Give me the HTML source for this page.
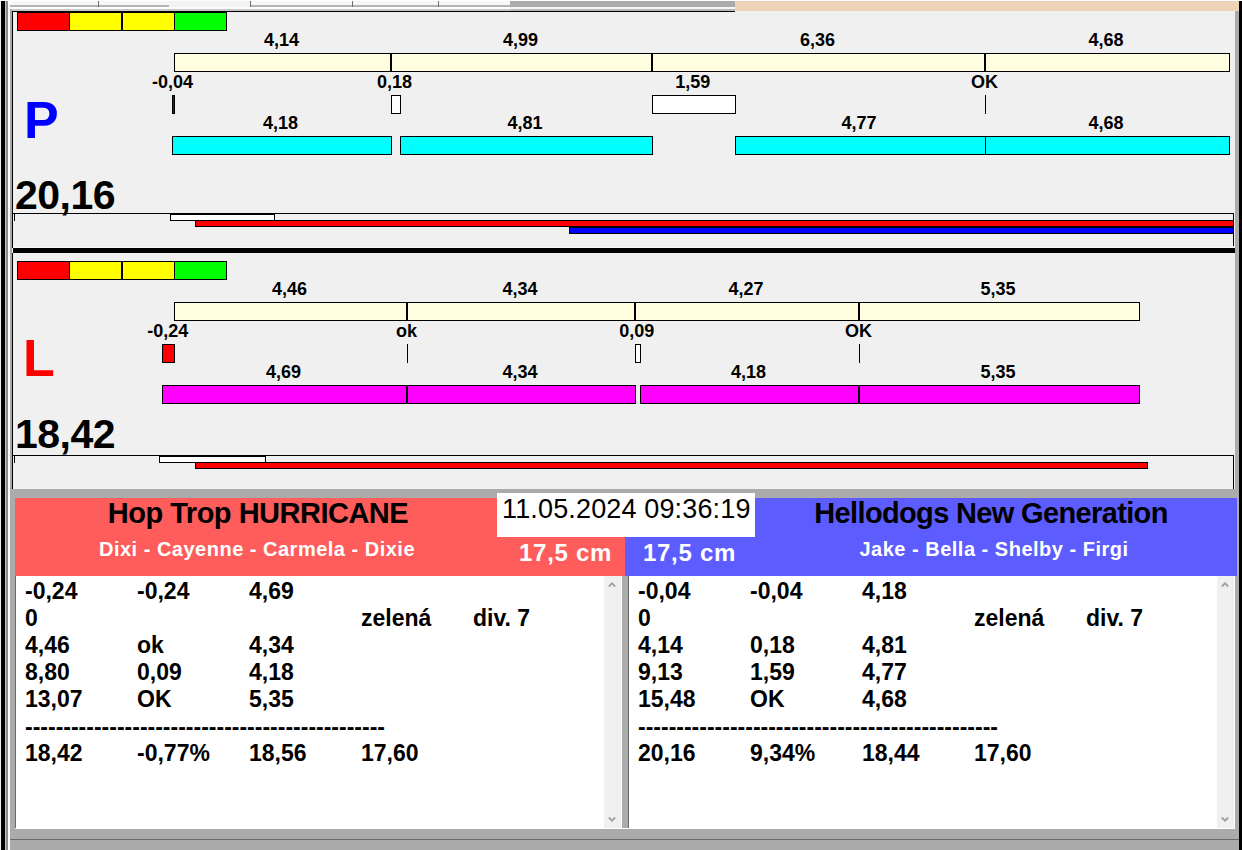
<!DOCTYPE html>
<html><head><meta charset="utf-8"><style>
html,body{margin:0;padding:0;}
body{width:1242px;height:850px;position:relative;overflow:hidden;background:#f0f0f0;font-family:"Liberation Sans", sans-serif;}
.a{position:absolute;box-sizing:border-box;}
.t{position:absolute;white-space:pre;font-family:"Liberation Sans", sans-serif;}
</style></head><body>
<div class="a" style="left:0px;top:0px;width:1242px;height:850px;background:#f0f0f0;"></div>
<div class="a" style="left:5px;top:0px;width:1234px;height:11px;background:#f0f0f0;"></div>
<div class="a" style="left:8px;top:1px;width:502px;height:4px;background:#f7f7f7;"></div>
<div class="a" style="left:8px;top:5px;width:502px;height:2px;background:#b4b4b4;"></div>
<div class="a" style="left:5px;top:7px;width:1234px;height:2px;background:#fdfdfd;"></div>
<div class="a" style="left:5px;top:9px;width:1234px;height:2px;background:#c8c8c8;"></div>
<div class="a" style="left:169px;top:1px;width:81px;height:6px;background:#f3f3f3;"></div>
<div class="a" style="left:98px;top:1px;width:1px;height:6px;background:#6e6e6e;"></div>
<div class="a" style="left:250px;top:1px;width:1px;height:6px;background:#6e6e6e;"></div>
<div class="a" style="left:352px;top:1px;width:1px;height:6px;background:#6e6e6e;"></div>
<div class="a" style="left:438px;top:1px;width:1px;height:6px;background:#6e6e6e;"></div>
<div class="a" style="left:510px;top:1px;width:225px;height:6px;background:#ababab;"></div>
<div class="a" style="left:510px;top:7px;width:225px;height:2px;background:#f5f5f5;"></div>
<div class="a" style="left:510px;top:9px;width:225px;height:2px;background:#b8b8b8;"></div>
<div class="a" style="left:735px;top:1px;width:504px;height:11px;background:#efd3b8;"></div>
<div class="a" style="left:0px;top:0px;width:1242px;height:1px;background:#ffffff;"></div>
<div class="a" style="left:1px;top:1px;width:4px;height:849px;background:#000;"></div>
<div class="a" style="left:5px;top:1px;width:1px;height:849px;background:#c0c0c0;"></div>
<div class="a" style="left:6px;top:1px;width:2px;height:849px;background:#8c8c8c;"></div>
<div class="a" style="left:8px;top:1px;width:2px;height:849px;background:#ffffff;"></div>
<div class="a" style="left:10px;top:9px;width:2px;height:841px;background:#a9a9a9;"></div>
<div class="a" style="left:1235px;top:11px;width:4px;height:839px;background:#ababab;"></div>
<div class="a" style="left:1239px;top:1px;width:3px;height:849px;background:#000;"></div>
<div class="a" style="left:12px;top:11px;width:1223px;height:237px;background:#f0f0f0;"></div>
<div class="a" style="left:12px;top:11px;width:1px;height:237px;background:#000;"></div>
<div class="a" style="left:12px;top:11px;width:723px;height:1px;background:#000;"></div>
<div class="a" style="left:12px;top:253px;width:1223px;height:236px;background:#f0f0f0;"></div>
<div class="a" style="left:12px;top:253px;width:1px;height:236px;background:#000;"></div>
<div class="a" style="left:13px;top:248px;width:1222px;height:5px;background:#000;"></div>
<div class="a" style="left:13px;top:247px;width:1222px;height:1px;background:#fafafa;"></div>
<div class="a" style="left:17px;top:12px;width:53px;height:19px;background:#ff0000;box-shadow:inset 0 0 0 1px #000;"></div>
<div class="a" style="left:69px;top:12px;width:53px;height:19px;background:#ffff00;box-shadow:inset 0 0 0 1px #000;"></div>
<div class="a" style="left:122px;top:12px;width:53px;height:19px;background:#ffff00;box-shadow:inset 0 0 0 1px #000;"></div>
<div class="a" style="left:174px;top:12px;width:53px;height:19px;background:#00ff00;box-shadow:inset 0 0 0 1px #000;"></div>
<div class="t" style="left:24px;top:94px;font-size:52px;line-height:52px;font-weight:bold;color:#0000ff;">P</div>
<div class="t" style="left:-18.5px;width:600px;text-align:center;top:31px;font-size:18px;line-height:18px;font-weight:bold;color:#000;">4,14</div>
<div class="t" style="left:220.5px;width:600px;text-align:center;top:31px;font-size:18px;line-height:18px;font-weight:bold;color:#000;">4,99</div>
<div class="t" style="left:517.5px;width:600px;text-align:center;top:31px;font-size:18px;line-height:18px;font-weight:bold;color:#000;">6,36</div>
<div class="t" style="left:806.0px;width:600px;text-align:center;top:31px;font-size:18px;line-height:18px;font-weight:bold;color:#000;">4,68</div>
<div class="a" style="left:174px;top:53px;width:218px;height:19px;background:#ffffe0;box-shadow:inset 0 0 0 1px #000;"></div>
<div class="a" style="left:391px;top:53px;width:262px;height:19px;background:#ffffe0;box-shadow:inset 0 0 0 1px #000;"></div>
<div class="a" style="left:390px;top:53px;width:2px;height:19px;background:#000;"></div>
<div class="a" style="left:652px;top:53px;width:334px;height:19px;background:#ffffe0;box-shadow:inset 0 0 0 1px #000;"></div>
<div class="a" style="left:651px;top:53px;width:2px;height:19px;background:#000;"></div>
<div class="a" style="left:985px;top:53px;width:245px;height:19px;background:#ffffe0;box-shadow:inset 0 0 0 1px #000;"></div>
<div class="a" style="left:984px;top:53px;width:2px;height:19px;background:#000;"></div>
<div class="t" style="left:-127.5px;width:600px;text-align:center;top:73px;font-size:18px;line-height:18px;font-weight:bold;color:#000;">-0,04</div>
<div class="t" style="left:94.5px;width:600px;text-align:center;top:73px;font-size:18px;line-height:18px;font-weight:bold;color:#000;">0,18</div>
<div class="t" style="left:392.70000000000005px;width:600px;text-align:center;top:73px;font-size:18px;line-height:18px;font-weight:bold;color:#000;">1,59</div>
<div class="t" style="left:684.6px;width:600px;text-align:center;top:73px;font-size:18px;line-height:18px;font-weight:bold;color:#000;">OK</div>
<div class="a" style="left:172px;top:95px;width:3px;height:19px;background:#800000;box-shadow:inset 0 0 0 1px #000;"></div>
<div class="a" style="left:391px;top:95px;width:10px;height:19px;background:#ffffff;box-shadow:inset 0 0 0 1px #000;"></div>
<div class="a" style="left:652px;top:95px;width:84px;height:19px;background:#ffffff;box-shadow:inset 0 0 0 1px #000;"></div>
<div class="a" style="left:985px;top:95px;width:1px;height:19px;background:#000;"></div>
<div class="t" style="left:-19.5px;width:600px;text-align:center;top:114px;font-size:18px;line-height:18px;font-weight:bold;color:#000;">4,18</div>
<div class="t" style="left:225.0px;width:600px;text-align:center;top:114px;font-size:18px;line-height:18px;font-weight:bold;color:#000;">4,81</div>
<div class="t" style="left:559.0px;width:600px;text-align:center;top:114px;font-size:18px;line-height:18px;font-weight:bold;color:#000;">4,77</div>
<div class="t" style="left:806.0px;width:600px;text-align:center;top:114px;font-size:18px;line-height:18px;font-weight:bold;color:#000;">4,68</div>
<div class="a" style="left:172px;top:136px;width:220px;height:19px;background:#00ffff;box-shadow:inset 0 0 0 1px #000;"></div>
<div class="a" style="left:400px;top:136px;width:253px;height:19px;background:#00ffff;box-shadow:inset 0 0 0 1px #000;"></div>
<div class="a" style="left:735px;top:136px;width:251px;height:19px;background:#00ffff;box-shadow:inset 0 0 0 1px #000;"></div>
<div class="a" style="left:985px;top:136px;width:245px;height:19px;background:#00ffff;box-shadow:inset 0 0 0 1px #000;"></div>
<div class="t" style="left:15px;top:175px;font-size:41px;line-height:41px;font-weight:bold;color:#000;letter-spacing:-0.5px;">20,16</div>
<div class="a" style="left:13px;top:213px;width:1221px;height:1px;background:#000;"></div>
<div class="a" style="left:1233px;top:213px;width:1px;height:33px;background:#000;"></div>
<div class="a" style="left:14px;top:214px;width:1px;height:7px;background:#000;"></div>
<div class="a" style="left:170px;top:213px;width:105px;height:8px;background:#ffffff;box-shadow:inset 0 0 0 1px #000;"></div>
<div class="a" style="left:170px;top:214px;width:105px;height:1px;background:#000;"></div>
<div class="a" style="left:195px;top:220px;width:1039px;height:7px;background:#ff0000;box-shadow:inset 0 0 0 1px #000;"></div>
<div class="a" style="left:569px;top:227px;width:665px;height:7px;background:#0000ff;box-shadow:inset 0 0 0 1px #000;"></div>
<div class="a" style="left:17px;top:261px;width:53px;height:19px;background:#ff0000;box-shadow:inset 0 0 0 1px #000;"></div>
<div class="a" style="left:69px;top:261px;width:53px;height:19px;background:#ffff00;box-shadow:inset 0 0 0 1px #000;"></div>
<div class="a" style="left:122px;top:261px;width:53px;height:19px;background:#ffff00;box-shadow:inset 0 0 0 1px #000;"></div>
<div class="a" style="left:174px;top:261px;width:53px;height:19px;background:#00ff00;box-shadow:inset 0 0 0 1px #000;"></div>
<div class="t" style="left:23px;top:332px;font-size:52px;line-height:52px;font-weight:bold;color:#ff0000;">L</div>
<div class="t" style="left:-10.5px;width:600px;text-align:center;top:280px;font-size:18px;line-height:18px;font-weight:bold;color:#000;">4,46</div>
<div class="t" style="left:220.0px;width:600px;text-align:center;top:280px;font-size:18px;line-height:18px;font-weight:bold;color:#000;">4,34</div>
<div class="t" style="left:446.0px;width:600px;text-align:center;top:280px;font-size:18px;line-height:18px;font-weight:bold;color:#000;">4,27</div>
<div class="t" style="left:698.0px;width:600px;text-align:center;top:280px;font-size:18px;line-height:18px;font-weight:bold;color:#000;">5,35</div>
<div class="a" style="left:174px;top:302px;width:234px;height:19px;background:#ffffe0;box-shadow:inset 0 0 0 1px #000;"></div>
<div class="a" style="left:407px;top:302px;width:229px;height:19px;background:#ffffe0;box-shadow:inset 0 0 0 1px #000;"></div>
<div class="a" style="left:406px;top:302px;width:2px;height:19px;background:#000;"></div>
<div class="a" style="left:635px;top:302px;width:225px;height:19px;background:#ffffe0;box-shadow:inset 0 0 0 1px #000;"></div>
<div class="a" style="left:634px;top:302px;width:2px;height:19px;background:#000;"></div>
<div class="a" style="left:859px;top:302px;width:281px;height:19px;background:#ffffe0;box-shadow:inset 0 0 0 1px #000;"></div>
<div class="a" style="left:858px;top:302px;width:2px;height:19px;background:#000;"></div>
<div class="t" style="left:-132.3px;width:600px;text-align:center;top:322px;font-size:18px;line-height:18px;font-weight:bold;color:#000;">-0,24</div>
<div class="t" style="left:106.60000000000002px;width:600px;text-align:center;top:322px;font-size:18px;line-height:18px;font-weight:bold;color:#000;">ok</div>
<div class="t" style="left:336.70000000000005px;width:600px;text-align:center;top:322px;font-size:18px;line-height:18px;font-weight:bold;color:#000;">0,09</div>
<div class="t" style="left:558.6px;width:600px;text-align:center;top:322px;font-size:18px;line-height:18px;font-weight:bold;color:#000;">OK</div>
<div class="a" style="left:162px;top:344px;width:13px;height:19px;background:#ff0000;box-shadow:inset 0 0 0 1px #000;"></div>
<div class="a" style="left:407px;top:344px;width:1px;height:19px;background:#000;"></div>
<div class="a" style="left:635px;top:344px;width:6px;height:19px;background:#ffffff;box-shadow:inset 0 0 0 1px #000;"></div>
<div class="a" style="left:859px;top:344px;width:1px;height:19px;background:#000;"></div>
<div class="t" style="left:-16.5px;width:600px;text-align:center;top:363px;font-size:18px;line-height:18px;font-weight:bold;color:#000;">4,69</div>
<div class="t" style="left:220.0px;width:600px;text-align:center;top:363px;font-size:18px;line-height:18px;font-weight:bold;color:#000;">4,34</div>
<div class="t" style="left:448.5px;width:600px;text-align:center;top:363px;font-size:18px;line-height:18px;font-weight:bold;color:#000;">4,18</div>
<div class="t" style="left:698.0px;width:600px;text-align:center;top:363px;font-size:18px;line-height:18px;font-weight:bold;color:#000;">5,35</div>
<div class="a" style="left:162px;top:385px;width:246px;height:19px;background:#ff00ff;box-shadow:inset 0 0 0 1px #000;"></div>
<div class="a" style="left:407px;top:385px;width:229px;height:19px;background:#ff00ff;box-shadow:inset 0 0 0 1px #000;"></div>
<div class="a" style="left:406px;top:385px;width:2px;height:19px;background:#000;"></div>
<div class="a" style="left:640px;top:385px;width:220px;height:19px;background:#ff00ff;box-shadow:inset 0 0 0 1px #000;"></div>
<div class="a" style="left:859px;top:385px;width:281px;height:19px;background:#ff00ff;box-shadow:inset 0 0 0 1px #000;"></div>
<div class="a" style="left:858px;top:385px;width:2px;height:19px;background:#000;"></div>
<div class="t" style="left:15px;top:414px;font-size:41px;line-height:41px;font-weight:bold;color:#000;letter-spacing:-0.5px;">18,42</div>
<div class="a" style="left:13px;top:455px;width:1221px;height:1px;background:#000;"></div>
<div class="a" style="left:1233px;top:455px;width:1px;height:34px;background:#000;"></div>
<div class="a" style="left:14px;top:456px;width:1px;height:7px;background:#000;"></div>
<div class="a" style="left:159px;top:455px;width:107px;height:8px;background:#ffffff;box-shadow:inset 0 0 0 1px #000;"></div>
<div class="a" style="left:159px;top:456px;width:107px;height:1px;background:#000;"></div>
<div class="a" style="left:195px;top:462px;width:953px;height:7px;background:#ff0000;box-shadow:inset 0 0 0 1px #000;"></div>
<div class="a" style="left:10px;top:489px;width:1229px;height:9px;background:#ababab;"></div>
<div class="a" style="left:10px;top:498px;width:5px;height:352px;background:#ababab;"></div>
<div class="a" style="left:15px;top:498px;width:610px;height:78px;background:#ff5c5c;"></div>
<div class="a" style="left:625px;top:498px;width:612px;height:78px;background:#5c5cff;"></div>
<div class="a" style="left:497px;top:493px;width:258px;height:44px;background:#ffffff;"></div>
<div class="t" style="left:502px;top:496px;font-size:27px;line-height:27px;font-weight:normal;color:#000;letter-spacing:0.15px;">11.05.2024 09:36:19</div>
<div class="t" style="left:-42px;width:600px;text-align:center;top:499px;font-size:29px;line-height:29px;font-weight:bold;color:#000;letter-spacing:-0.5px;">Hop Trop HURRICANE</div>
<div class="t" style="left:-43px;width:600px;text-align:center;top:539px;font-size:20px;line-height:20px;font-weight:bold;color:#fff;letter-spacing:0.5px;">Dixi - Cayenne - Carmela - Dixie</div>
<div class="t" style="left:12px;width:600px;text-align:right;top:541px;font-size:24px;line-height:24px;font-weight:bold;color:#fff;letter-spacing:0.7px;">17,5 cm</div>
<div class="t" style="left:643px;top:541px;font-size:24px;line-height:24px;font-weight:bold;color:#fff;letter-spacing:0.7px;">17,5 cm</div>
<div class="t" style="left:691px;width:600px;text-align:center;top:499px;font-size:29px;line-height:29px;font-weight:bold;color:#000;letter-spacing:-0.65px;">Hellodogs New Generation</div>
<div class="t" style="left:694px;width:600px;text-align:center;top:539px;font-size:20px;line-height:20px;font-weight:bold;color:#fff;letter-spacing:0.5px;">Jake - Bella - Shelby - Firgi</div>
<div class="a" style="left:16px;top:576px;width:606px;height:252px;background:#ffffff;"></div>
<div class="a" style="left:15px;top:576px;width:1px;height:252px;background:#696969;"></div>
<div class="a" style="left:604px;top:576px;width:18px;height:252px;background:#f0f0f0;"></div>
<div class="a" style="left:621px;top:576px;width:1px;height:252px;background:#ffffff;"></div>
<svg class="a" style="left:608px;top:581px" width="10" height="8"><path d="M0.8 5.5 L4 2.3 L7.2 5.5" stroke="#a0a0a0" stroke-width="1.8" fill="none"/></svg>
<svg class="a" style="left:608px;top:815px" width="10" height="8"><path d="M0.8 2.5 L4 5.7 L7.2 2.5" stroke="#a0a0a0" stroke-width="1.8" fill="none"/></svg>
<div class="t" style="left:25px;top:580px;font-size:23px;line-height:23px;font-weight:bold;color:#000;">-0,24</div>
<div class="t" style="left:137px;top:580px;font-size:23px;line-height:23px;font-weight:bold;color:#000;">-0,24</div>
<div class="t" style="left:249px;top:580px;font-size:23px;line-height:23px;font-weight:bold;color:#000;">4,69</div>
<div class="t" style="left:25px;top:607px;font-size:23px;line-height:23px;font-weight:bold;color:#000;">0</div>
<div class="t" style="left:361px;top:607px;font-size:23px;line-height:23px;font-weight:bold;color:#000;">zelená</div>
<div class="t" style="left:473px;top:607px;font-size:23px;line-height:23px;font-weight:bold;color:#000;">div. 7</div>
<div class="t" style="left:25px;top:634px;font-size:23px;line-height:23px;font-weight:bold;color:#000;">4,46</div>
<div class="t" style="left:137px;top:634px;font-size:23px;line-height:23px;font-weight:bold;color:#000;">ok</div>
<div class="t" style="left:249px;top:634px;font-size:23px;line-height:23px;font-weight:bold;color:#000;">4,34</div>
<div class="t" style="left:25px;top:661px;font-size:23px;line-height:23px;font-weight:bold;color:#000;">8,80</div>
<div class="t" style="left:137px;top:661px;font-size:23px;line-height:23px;font-weight:bold;color:#000;">0,09</div>
<div class="t" style="left:249px;top:661px;font-size:23px;line-height:23px;font-weight:bold;color:#000;">4,18</div>
<div class="t" style="left:25px;top:688px;font-size:23px;line-height:23px;font-weight:bold;color:#000;">13,07</div>
<div class="t" style="left:137px;top:688px;font-size:23px;line-height:23px;font-weight:bold;color:#000;">OK</div>
<div class="t" style="left:249px;top:688px;font-size:23px;line-height:23px;font-weight:bold;color:#000;">5,35</div>
<div class="t" style="left:25px;top:716px;font-size:23px;line-height:23px;font-weight:bold;color:#000;">-----------------------------------------------</div>
<div class="t" style="left:25px;top:742px;font-size:23px;line-height:23px;font-weight:bold;color:#000;">18,42</div>
<div class="t" style="left:137px;top:742px;font-size:23px;line-height:23px;font-weight:bold;color:#000;">-0,77%</div>
<div class="t" style="left:249px;top:742px;font-size:23px;line-height:23px;font-weight:bold;color:#000;">18,56</div>
<div class="t" style="left:361px;top:742px;font-size:23px;line-height:23px;font-weight:bold;color:#000;">17,60</div>
<div class="a" style="left:622px;top:576px;width:6px;height:274px;background:#ababab;"></div>
<div class="a" style="left:629px;top:576px;width:606px;height:252px;background:#ffffff;"></div>
<div class="a" style="left:628px;top:576px;width:1px;height:252px;background:#696969;"></div>
<div class="a" style="left:1217px;top:576px;width:18px;height:252px;background:#f0f0f0;"></div>
<div class="a" style="left:1234px;top:576px;width:1px;height:252px;background:#ffffff;"></div>
<svg class="a" style="left:1221px;top:581px" width="10" height="8"><path d="M0.8 5.5 L4 2.3 L7.2 5.5" stroke="#a0a0a0" stroke-width="1.8" fill="none"/></svg>
<svg class="a" style="left:1221px;top:815px" width="10" height="8"><path d="M0.8 2.5 L4 5.7 L7.2 2.5" stroke="#a0a0a0" stroke-width="1.8" fill="none"/></svg>
<div class="t" style="left:638px;top:580px;font-size:23px;line-height:23px;font-weight:bold;color:#000;">-0,04</div>
<div class="t" style="left:750px;top:580px;font-size:23px;line-height:23px;font-weight:bold;color:#000;">-0,04</div>
<div class="t" style="left:862px;top:580px;font-size:23px;line-height:23px;font-weight:bold;color:#000;">4,18</div>
<div class="t" style="left:638px;top:607px;font-size:23px;line-height:23px;font-weight:bold;color:#000;">0</div>
<div class="t" style="left:974px;top:607px;font-size:23px;line-height:23px;font-weight:bold;color:#000;">zelená</div>
<div class="t" style="left:1086px;top:607px;font-size:23px;line-height:23px;font-weight:bold;color:#000;">div. 7</div>
<div class="t" style="left:638px;top:634px;font-size:23px;line-height:23px;font-weight:bold;color:#000;">4,14</div>
<div class="t" style="left:750px;top:634px;font-size:23px;line-height:23px;font-weight:bold;color:#000;">0,18</div>
<div class="t" style="left:862px;top:634px;font-size:23px;line-height:23px;font-weight:bold;color:#000;">4,81</div>
<div class="t" style="left:638px;top:661px;font-size:23px;line-height:23px;font-weight:bold;color:#000;">9,13</div>
<div class="t" style="left:750px;top:661px;font-size:23px;line-height:23px;font-weight:bold;color:#000;">1,59</div>
<div class="t" style="left:862px;top:661px;font-size:23px;line-height:23px;font-weight:bold;color:#000;">4,77</div>
<div class="t" style="left:638px;top:688px;font-size:23px;line-height:23px;font-weight:bold;color:#000;">15,48</div>
<div class="t" style="left:750px;top:688px;font-size:23px;line-height:23px;font-weight:bold;color:#000;">OK</div>
<div class="t" style="left:862px;top:688px;font-size:23px;line-height:23px;font-weight:bold;color:#000;">4,68</div>
<div class="t" style="left:638px;top:716px;font-size:23px;line-height:23px;font-weight:bold;color:#000;">-----------------------------------------------</div>
<div class="t" style="left:638px;top:742px;font-size:23px;line-height:23px;font-weight:bold;color:#000;">20,16</div>
<div class="t" style="left:750px;top:742px;font-size:23px;line-height:23px;font-weight:bold;color:#000;">9,34%</div>
<div class="t" style="left:862px;top:742px;font-size:23px;line-height:23px;font-weight:bold;color:#000;">18,44</div>
<div class="t" style="left:974px;top:742px;font-size:23px;line-height:23px;font-weight:bold;color:#000;">17,60</div>
<div class="a" style="left:16px;top:828px;width:1219px;height:1px;background:#ffffff;"></div>
<div class="a" style="left:10px;top:829px;width:1229px;height:21px;background:#ababab;"></div>
<div class="a" style="left:10px;top:839px;width:1229px;height:1px;background:#696969;"></div>
</body></html>
